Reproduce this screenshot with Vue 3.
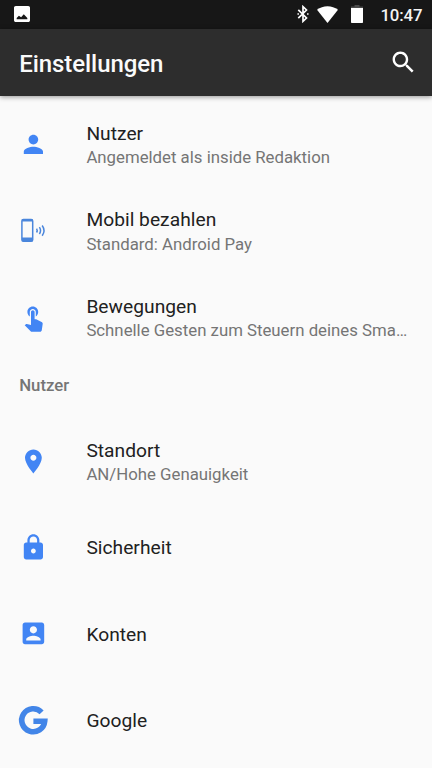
<script setup>
const icons = {
  person: 'M12 12c2.21 0 4-1.79 4-4s-1.79-4-4-4-4 1.79-4 4 1.79 4 4 4zm0 2c-2.67 0-8 1.34-8 4v2h16v-2c0-2.66-5.33-4-8-4z',
  touch: 'M9 11.24V7.5C9 6.12 10.12 5 11.5 5S14 6.12 14 7.5v3.74c1.21-.81 2-2.18 2-3.74C16 5.01 13.99 3 11.5 3S7 5.01 7 7.5c0 1.56.79 2.93 2 3.74zm9.84 4.63l-4.54-2.26c-.17-.07-.35-.11-.54-.11H13v-6c0-.83-.67-1.5-1.5-1.5S10 6.67 10 7.5v10.74l-3.43-.72c-.08-.01-.15-.03-.24-.03-.31 0-.59.13-.79.33l-.79.8 4.94 4.94c.27.27.65.44 1.06.44h6.79c.75 0 1.33-.55 1.44-1.28l.75-5.27c.01-.07.02-.14.02-.2 0-.62-.38-1.16-.91-1.38z',
  place: 'M12 2C8.13 2 5 5.13 5 9c0 5.25 7 13 7 13s7-7.75 7-13c0-3.87-3.13-7-7-7zm0 9.5c-1.38 0-2.5-1.12-2.5-2.5s1.12-2.5 2.5-2.5 2.5 1.12 2.5 2.5-1.12 2.5-2.5 2.5z',
  lock: 'M18 8h-1V6c0-2.76-2.24-5-5-5S7 3.24 7 6v2H6c-1.1 0-2 .9-2 2v10c0 1.1.9 2 2 2h12c1.1 0 2-.9 2-2V10c0-1.1-.9-2-2-2zm-6 9c-1.1 0-2-.9-2-2s.9-2 2-2 2 .9 2 2-.9 2-2 2zm3.1-9H8.9V6c0-1.71 1.39-3.1 3.1-3.1 1.71 0 3.1 1.39 3.1 3.1v2z',
  account: 'M3 5v14c0 1.1.89 2 2 2h14c1.1 0 2-.9 2-2V5c0-1.1-.9-2-2-2H5c-1.11 0-2 .9-2 2zm12 4c0 1.66-1.34 3-3 3s-3-1.34-3-3 1.34-3 3-3 3 1.34 3 3zm-9 8c0-2 4-3.1 6-3.1s6 1.1 6 3.1v1H6v-1z',
}
const sections = [
  {
    items: [
      { icon: 'person', title: 'Nutzer', summary: 'Angemeldet als inside Redaktion' },
      { icon: 'pay', title: 'Mobil bezahlen', summary: 'Standard: Android Pay' },
      { icon: 'touch', title: 'Bewegungen', summary: 'Schnelle Gesten zum Steuern deines Sma…' },
    ],
  },
  {
    heading: 'Nutzer',
    items: [
      { icon: 'place', title: 'Standort', summary: 'AN/Hohe Genauigkeit' },
      { icon: 'lock', title: 'Sicherheit' },
      { icon: 'account', title: 'Konten' },
      { icon: 'google', title: 'Google' },
    ],
  },
]
</script>

<template>
  <div class="screen">
    <div class="status">
      <svg class="s-image" viewBox="3 3 18 18"><path fill="#fff" d="M21 19V5c0-1.1-.9-2-2-2H5c-1.1 0-2 .9-2 2v14c0 1.1.9 2 2 2h14c1.1 0 2-.9 2-2zM6 18v-1.600l2.500-2.400 2.500 1.600 3-3.400 4 4.400V18z" /></svg>
      <svg class="s-bt" viewBox="0 0 12 18" fill="none" stroke="#fff" stroke-width="1.7"><path d="M1.300 4.800 9.500 13 6 16.300V1.700L9.500 5 1.300 13.200" /><path d="M1.200 8.200v1.600M10.800 8.200v1.600" stroke-width="1.500" /></svg>
      <svg class="s-wifi" viewBox="0 0 21 17"><path fill="#fff" d="M10.500 17 0 3.800C3 1.400 6.600.2 10.500.2S18 1.400 21 3.800z" /></svg>
      <svg class="s-bat" viewBox="0 0 12 18"><path fill="#4a4a4a" d="M3.500 0h5v1.500H12V4H0V1.500h3.500z" /><path fill="#fff" d="M0 3h12v14.200q0 .8-.8.8H.8q-.8 0-.8-.8z" /></svg>
      <span class="time">10:47</span>
    </div>
    <header class="bar">
      <h1>Einstellungen</h1>
      <svg class="search" viewBox="0 0 24 24"><path fill="#fff" d="M15.500 14h-.79l-.28-.27C15.410 12.590 16 11.110 16 9.500 16 5.910 13.090 3 9.500 3S3 5.910 3 9.500 5.910 16 9.500 16c1.610 0 3.090-.59 4.230-1.570l.27.28v.79l5 4.990L20.490 19l-4.990-5zm-6 0C7.010 14 5 11.990 5 9.500S7.010 5 9.500 5 14 7.010 14 9.500 11.990 14 9.500 14z" /></svg>
    </header>
    <main>
      <section v-for="(s, i) in sections" :key="i">
        <h2 v-if="s.heading">{{ s.heading }}</h2>
        <div v-for="item in s.items" :key="item.title" class="row">
          <svg v-if="item.icon === 'pay'" class="icon" viewBox="0 0 28.8 28.8" fill="none" stroke="#4a86dc">
            <rect x="2.900" y="3.600" width="10.800" height="21.600" rx="1.500" stroke-width="1.500" />
            <path d="M2.900 4.400h10.800" stroke-width="2.200" />
            <path d="M2.900 23.400h10.800" stroke-width="3.800" />
            <path d="M17.600 12.700q1.200 1.900 0 3.800M20.400 11.200q2.300 3.400 0 6.800M23.200 9.500q3.600 5.100 0 10.200" stroke-width="1.500" />
          </svg>
          <svg v-else-if="item.icon === 'google'" class="icon" viewBox="0 0 28.8 28.8" fill="none" stroke="#4285e8" stroke-width="5.6">
            <path d="M22.600 6.300A11.500 11.500 0 1 0 25.700 15.200H14.400" />
          </svg>
          <svg v-else class="icon" viewBox="0 0 24 24"><path fill="#4285f4" :d="icons[item.icon]" /></svg>
          <div class="text">
            <div class="title">{{ item.title }}</div>
            <div v-if="item.summary" class="summary">{{ item.summary }}</div>
          </div>
        </div>
      </section>
    </main>
  </div>
</template>

<style>
body { background: #fafafa; overflow: hidden; }
</style>

<style scoped>
.screen { width: 432px; height: 768px; overflow: hidden; background: #fafafa; font-family: Roboto, sans-serif; color: #212121; }
.status { display: flex; align-items: center; box-sizing: border-box; height: 28.500px; padding: 0 9.500px 0 13.500px; background: #171717; }
.s-image { width: 16px; height: 16px; margin-right: auto; }
.s-bt { width: 12px; height: 18px; margin-right: 7.500px; }
.s-wifi { width: 21px; height: 17px; margin-right: 13.500px; }
.s-bat { width: 12px; height: 18px; margin-right: 17px; }
.time { color: #f4f4f4; font-size: 16.800px; font-weight: 500; line-height: 20px; padding-top: 2px; letter-spacing: -.1px; }
.bar { display: flex; align-items: center; justify-content: space-between; box-sizing: border-box; height: 67.500px; padding: 0 14.500px 0 19.200px; background: #2d2d2d; box-shadow: 0 1px 5px rgba(0, 0, 0, .42); }
h1 { margin: 4px 0 0; font-size: 24px; line-height: 30px; font-weight: 500; letter-spacing: -.06px; color: #fafafa; }
.search { width: 28.800px; height: 28.800px; }
main { padding-top: 5px; }
.row { display: flex; align-items: center; height: 86.400px; padding: 0 19.200px; }
.icon { width: 28.800px; height: 28.800px; margin-right: 38.400px; flex: none; overflow: visible; }
.text { min-width: 0; padding-top: 1.600px; white-space: nowrap; }
.title { font-size: 19.200px; line-height: 25.500px; letter-spacing: .03px; }
.summary { font-size: 16.800px; line-height: 22.500px; color: #757575; }
h2 { margin: 0; box-sizing: border-box; height: 57.600px; padding: 13.700px 19.200px 0; font-size: 16.800px; line-height: 22px; font-weight: 500; color: #757575; }
</style>
